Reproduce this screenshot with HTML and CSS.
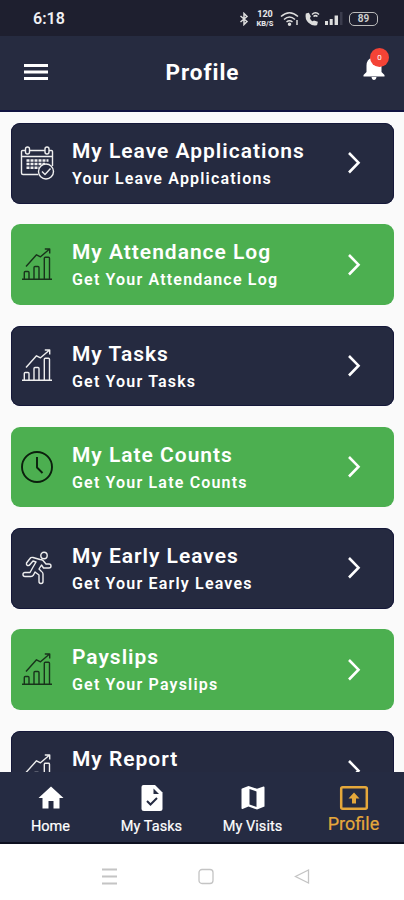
FILE: index.html
```
<!DOCTYPE html>
<html lang="en">
<head>
<meta charset="utf-8">
<title>Profile</title>
<link rel="stylesheet" href="styles.css">
</head>
<body>
<svg class="defs" width="0" height="0" aria-hidden="true">
  <symbol id="growth" viewBox="0 0 32 34">
    <path d="M1 32.3H31M3.3 32V25.5Q3.3 24.5 4.3 24.5H7Q8 24.5 8 25.5V32M13 32V20.5Q13 19.5 14 19.5H17Q18 19.5 18 20.5V32M23.300 32V11.300Q23.300 10.300 24.300 10.300H27.500Q28.500 10.300 28.500 11.300V32M5 19.500L15.500 7.800 19.500 9.800 28 2.500M23.800 2H28.700V6.500"/>
  </symbol>
  <symbol id="chevron" viewBox="0 0 14 24"><path d="M2 2L11.500 11.700 2 21.500"/></symbol>
</svg>
<div class="screen">
  <div class="status">
    <span class="time">6:18</span>
    <div class="signals">
      <svg width="10" height="14" viewBox="0 0 10 14" class="line"><path d="M1.500 4L8 9.500 5 12.500V1.500L8 4.500 1.500 10"/></svg>
      <div class="speed"><span>120</span><span>KB/S</span></div>
      <svg width="20" height="16" viewBox="0 0 20 16" class="line"><path d="M1 5.500Q9.500-2 18 5.500M4 8.500Q9.500 3.500 15 8.500M6.500 11Q9.500 8.500 12.500 11"/><circle cx="9.500" cy="13.300" r="1" fill="#ddd"/><path d="M17 9V14"/></svg>
      <svg width="16" height="16" viewBox="0 0 16 16" class="line"><path d="M2.500 3Q1.500 8 5 11.300T12.500 13.500L13 11.300 10 10.300 8.500 11.300Q6 10 5 7L6 5.500 4.500 2.500Z" fill="#ddd"/><path d="M8 3.500Q11.500 0 15 3.500M9.500 5.500Q11.500 3.700 13.500 5.500"/></svg>
      <svg width="18" height="14" viewBox="0 0 18 14"><path fill="#ddd" d="M0 9h3v4H0zM4.700 7h3v6h-3zM9.600 3.500h3.400V13H9.600z"/><path fill="#3b3c4d" d="M15 0h2.500v13H15z"/></svg>
      <div class="battery">89</div>
    </div>
  </div>
  <header class="appbar">
    <svg class="menu" width="24" height="18" viewBox="0 0 24 18"><path fill="#fff" d="M0 1h24v3H0zM0 7.500h24v3H0zM0 14h24v3H0z"/></svg>
    <h1>Profile</h1>
    <div class="bell">
      <svg width="22" height="26" viewBox="0 0 22 26"><path fill="#fff" d="M9 2.500Q9 .5 11 .5T13 2.500Q18.500 4.500 18.500 10.500V17L21.500 20V21.500H.5V20L3.500 17V10.500Q3.500 4.500 9 2.500ZM8.500 22H13.500Q13 25 11 25T8.500 22Z"/></svg>
      <span class="badge">0</span>
    </div>
  </header>
  <main class="list">
    <article class="card">
      <svg class="icon" width="36" height="36" viewBox="0 0 36 36">
        <path d="M7 5.500H3.500Q2.500 5.500 2.500 6.500V28Q2.500 29.500 4 29.500H19M11 5.500H26M30 5.500H32.500Q33.500 5.500 33.500 6.500V21M2.500 11.500H33.500"/>
        <rect x="6.500" y="2" width="4" height="7" rx="2"/><rect x="26" y="2" width="4" height="7" rx="2"/>
        <path class="dates" d="M7.500 15.500H29.500M7.500 19H26M7.500 22.700H20"/>
        <circle class="check-disc" cx="27" cy="26.500" r="7.500"/><path d="M23 26.500L26 29.500 31.500 23.500"/>
      </svg>
      <div class="text"><h2>My Leave Applications</h2><p>Your Leave Applications</p></div>
      <svg class="chevron" width="14" height="24"><use href="#chevron"/></svg>
    </article>
    <article class="card green">
      <svg class="icon growth" width="32" height="34"><use href="#growth"/></svg>
      <div class="text"><h2>My Attendance Log</h2><p>Get Your Attendance Log</p></div>
      <svg class="chevron" width="14" height="24"><use href="#chevron"/></svg>
    </article>
    <article class="card">
      <svg class="icon growth" width="32" height="34"><use href="#growth"/></svg>
      <div class="text"><h2>My Tasks</h2><p>Get Your Tasks</p></div>
      <svg class="chevron" width="14" height="24"><use href="#chevron"/></svg>
    </article>
    <article class="card green">
      <svg class="icon clock" width="34" height="34" viewBox="0 0 34 34"><circle cx="17" cy="17" r="15"/><path d="M17 7V17.500L22.500 23"/></svg>
      <div class="text"><h2>My Late Counts</h2><p>Get Your Late Counts</p></div>
      <svg class="chevron" width="14" height="24"><use href="#chevron"/></svg>
    </article>
    <article class="card">
      <svg class="icon runner" width="30" height="34" viewBox="0 0 30 34"><circle cx="22" cy="4.500" r="3.200"/><path d="M18 8.500L11 6.500Q9 6 8 7.500L4.500 12Q4 14 5.500 14.500T8 13.500L11 10 14 11 10.500 17 8 21.500H3Q1 21.500 1 23.500T3 25.500H9Q10.500 25.500 11.500 24L13 21 17 24V30.500Q17 32.500 19 32.500T21 30.500V23Q21 21.500 19.500 20.500L17 18 19.500 14 21.500 17H27Q29 17 29 15T27 13H24L21 9.500Q20 8.500 18 8.500Z"/></svg>
      <div class="text"><h2>My Early Leaves</h2><p>Get Your Early Leaves</p></div>
      <svg class="chevron" width="14" height="24"><use href="#chevron"/></svg>
    </article>
    <article class="card green">
      <svg class="icon growth" width="32" height="34"><use href="#growth"/></svg>
      <div class="text"><h2>Payslips</h2><p>Get Your Payslips</p></div>
      <svg class="chevron" width="14" height="24"><use href="#chevron"/></svg>
    </article>
    <article class="card">
      <svg class="icon growth" width="32" height="34"><use href="#growth"/></svg>
      <div class="text"><h2>My Report</h2></div>
      <svg class="chevron" width="14" height="24"><use href="#chevron"/></svg>
    </article>
  </main>
  <nav class="tabs">
    <div class="tab"><svg width="28" height="28" viewBox="0 0 28 28"><path fill="#fff" d="M14 2.500L1.500 14H5.500V24.500H11.500V17H16.500V24.500H22.500V14H26.500Z"/></svg><span>Home</span></div>
    <div class="tab"><svg width="28" height="28" viewBox="0 0 28 28"><path fill="#fff" d="M5.500 1H17L24.500 8.500V24.500Q24.500 27 22 27H6Q3.500 27 3.500 24.500V3Q3.500 1 5.500 1Z"/><path fill="#252b42" d="M15.500 4.500V10H21Z"/><path fill="none" stroke="#252b42" stroke-width="2" d="M9 17L12.500 20.500 19 14"/></svg><span>My Tasks</span></div>
    <div class="tab"><svg width="28" height="28" viewBox="0 0 28 28"><path fill="#fff" fill-rule="evenodd" d="M3 4.500L9.500 2 18 4.800 24.500 2.500Q25.500 2.300 25.500 3.500V22.500L18 25.500 9.500 22.500 3.500 25Q2.500 25.300 2.500 24V5ZM10.500 5V20.500L17.500 23V7.500Z"/></svg><span>My Visits</span></div>
    <div class="tab active"><svg width="30" height="28" viewBox="0 0 30 28"><rect x="2.200" y="3.200" width="25.600" height="21.600" rx="1.500" fill="none" stroke="#e5a83b" stroke-width="2.500"/><path fill="#e5a83b" d="M15 8.500L9.500 14.500H13V19.500H17V14.500H20.500Z"/></svg><span>Profile</span></div>
  </nav>
  <div class="system">
    <svg width="16" height="18" viewBox="0 0 16 18"><path d="M1 1.500H16M1 8.500H16M1 15.500H16" stroke-width="2"/></svg>
    <svg width="16" height="18" viewBox="0 0 16 18"><rect x="1" y="1.500" width="14" height="14" rx="3"/></svg>
    <svg width="16" height="18" viewBox="0 0 16 18"><path d="M14.500 2V15L1.500 8.500Z"/></svg>
  </div>
</div>
</body>
</html>
```
FILE: styles.css
```
* { box-sizing: border-box; margin: 0; padding: 0; }
body { font-family: Roboto, sans-serif; color: #fff; background: #fafafa; }
svg { display: block; flex: none; }
.defs { position: absolute; }
.screen { width: 404px; height: 900px; display: flex; flex-direction: column; overflow: hidden; }
.status { height: 36px; background: #1e1f2f; display: flex; align-items: center; justify-content: space-between; padding: 1px 26px 0 33px; flex: none; }
.time { font-size: 16px; font-weight: 600; color: #f0f0f4; }
.signals { display: flex; align-items: center; }
.line { fill: none; stroke: #ddd; stroke-width: 1.5; }
.speed { display: flex; flex-direction: column; align-items: center; width: 18px; margin: 0 6px 0 7px; font-weight: 800; color: #e2e2e6; }
.speed span:first-child { font-size: 9px; line-height: 10px; }
.speed span:last-child { font-size: 7.500px; line-height: 9px; }
.signals svg:nth-of-type(3) { margin: 0 5px 0 4px; }
.battery { width: 29px; height: 14px; margin-left: 6px; border: 1.500px solid #bbb; border-radius: 5px; font-size: 10px; line-height: 12px; text-align: center; font-weight: 700; color: #ccc; }
.appbar { height: 76px; flex: none; background: #262b40; border-bottom: 2px solid #111341; display: flex; align-items: center; justify-content: space-between; padding: 0 19px 0 24px; }
.appbar h1 { font-size: 22.500px; font-weight: 700; letter-spacing: .95px; margin: -2px 6px 0 0; }
.appbar .menu { margin-top: -2px; }
.bell { position: relative; width: 22px; height: 26px; margin-top: -10px; }
.badge { position: absolute; left: 7px; top: -7px; width: 19px; height: 19px; border-radius: 50%; background: #f44336; font-size: 8px; line-height: 19px; text-align: center; }
.list { flex: 1; min-height: 0; overflow: hidden; display: flex; flex-direction: column; gap: 20.750px; padding: 11px 10px 0 11px; }
.card { flex: none; height: 80.500px; border-radius: 9px; background: #252a40; box-shadow: inset 0 0 0 1px #15183a; display: flex; align-items: center; padding: 0 33px 0 8px; }
.card.green { background: #4caf50; box-shadow: none; }
.icon { width: 36px; fill: none; stroke: #eee; stroke-width: 1.400; stroke-linejoin: round; }
.growth { margin-top: -1px; }
.card.green .icon { stroke: #18331b; }
.card.green .clock { stroke: #0b1f0d; stroke-width: 1.900; }
.dates { stroke-width: 2.400; stroke-dasharray: 3 1; }
.check-disc { fill: #252a40; }
.text { flex: 1; align-self: flex-start; margin-left: 17px; padding-top: 14px; white-space: nowrap; }
.text h2 { font-size: 21px; line-height: 28px; font-weight: 600; letter-spacing: .980px; }
.text p { font-size: 16px; line-height: 20px; margin-top: 4px; font-weight: 600; letter-spacing: 1.180px; }
.chevron { fill: none; stroke: #fff; stroke-width: 2.600; }
.tabs { height: 72px; flex: none; background: #252b42; border-bottom: 2px solid #0d1020; display: flex; }
.tab { width: 101px; display: flex; flex-direction: column; align-items: center; padding-top: 12px; font-size: 14.500px; line-height: 18px; }
.tab span { margin-top: 6px; letter-spacing: .05px; -webkit-text-stroke: .2px; }
.tab.active { color: #e5a83b; font-size: 18px; }
.tab.active span { margin-top: 3px; letter-spacing: 0; }
.system { height: 56px; flex: none; background: #fff; display: flex; align-items: center; justify-content: space-between; padding: 9px 94px 0 101px; }
.system svg { fill: none; stroke: #c4c4c4; stroke-width: 1.300; }
```
